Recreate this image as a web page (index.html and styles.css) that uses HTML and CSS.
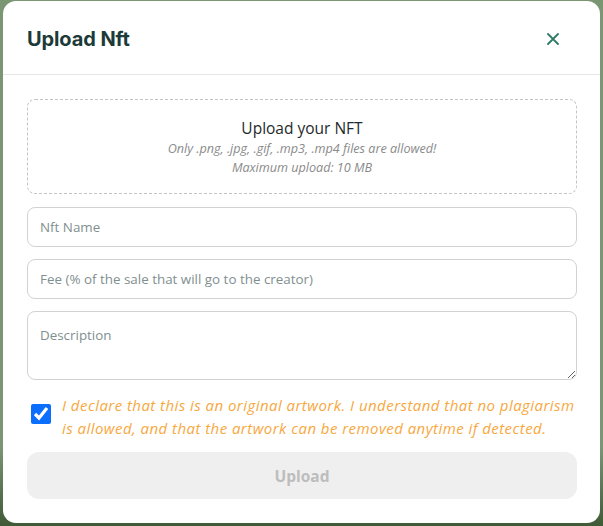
FILE: index.html
```html
<!DOCTYPE html>
<html lang="en">
<head>
<meta charset="utf-8">
<title>Upload Nft</title>
<link rel="stylesheet" href="styles.css">
</head>
<body>
<div class="modal">
  <header class="modal-header">
    <h1 class="modal-title">Upload Nft</h1>
    <button class="close-btn" aria-label="Close">
      <svg width="12" height="12" viewBox="0 0 12 12"><path d="M1 1L11 11M11 1L1 11" stroke="#2f7a66" stroke-width="1.8" stroke-linecap="round"/></svg>
    </button>
  </header>
  <div class="modal-body">
    <div class="dropzone">
      <div class="dz-title">Upload your NFT</div>
      <div class="dz-note">Only .png, .jpg, .gif, .mp3, .mp4 files are allowed!</div>
      <div class="dz-note">Maximum upload: 10 MB</div>
    </div>
    <input class="field first" type="text" placeholder="Nft Name">
    <input class="field" type="text" placeholder="Fee (% of the sale that will go to the creator)">
    <textarea class="field area" placeholder="Description"></textarea>
    <label class="declare">
      <input type="checkbox" class="check" checked>
      <span>I declare that this is an original artwork. I understand that no plagiarism is allowed, and that the artwork can be removed anytime if detected.</span>
    </label>
    <button class="upload-btn" disabled>Upload</button>
  </div>
</div>
</body>
</html>
```

FILE: styles.css
```css
html, body {
  margin: 0;
  padding: 0;
}
body {
  width: 603px;
  height: 526px;
  background: linear-gradient(180deg, #7a9673 0%, #7a9673 85%, #3f5a36 100%);
  font-family: "Open Sans", "Noto Sans", sans-serif;
  padding: 1px 3px 0 3px;
  box-sizing: border-box;
  overflow: hidden;
}
.modal {
  width: 597px;
  height: 522px;
  background: #fff;
  border-radius: 13px;
  box-sizing: border-box;
  display: flex;
  flex-direction: column;
}
.modal-header {
  height: 73px;
  border-bottom: 1px solid #e6e6e6;
  display: flex;
  align-items: center;
  justify-content: space-between;
  padding: 0 41px 0 24px;
}
.modal-title {
  margin: 0;
  font-family: "Inter", sans-serif;
  font-weight: 700;
  font-size: 20px;
  color: #1c3a37;
  letter-spacing: -0.1px;
  padding-top: 2px;
}
.close-btn {
  border: none;
  background: none;
  padding: 0;
  width: 12px;
  height: 12px;
  display: flex;
  margin-top: 2px;
}
.modal-body {
  padding: 24px 23px 0 24px;
  display: flex;
  flex-direction: column;
}
.dropzone {
  height: 95px;
  border: 1px dashed #c4c4c4;
  border-radius: 8px;
  box-sizing: border-box;
  display: flex;
  flex-direction: column;
  align-items: center;
  padding-top: 18px;
}
.dz-title {
  font-size: 15.5px;
  color: #1e2a2b;
  line-height: 21px;
  font-weight: 500;
}
.dz-note {
  font-size: 12.6px;
  font-style: italic;
  color: #8a8a8a;
  line-height: 19px;
}
.field {
  margin-top: 12px;
  height: 40px;
  border: 1px solid #d2d2d2;
  border-radius: 8px;
  box-sizing: border-box;
  padding: 0 12px;
  font-family: "Open Sans", sans-serif;
  font-size: 13.4px;
  color: #333;
  background: #fff;
  outline: none;
}
.field.first {
  margin-top: 13px;
}
.field::placeholder {
  color: #7f8f8f;
}
.area {
  height: 69px;
  padding-top: 14px;
  resize: vertical;
}
.declare {
  display: flex;
  align-items: flex-start;
  gap: 11px;
  margin-top: 14px;
  padding-left: 4px;
  font-size: 15px;
  letter-spacing: 0.45px;
  line-height: 23px;
  font-style: italic;
  color: #f7a83f;
}
.check {
  width: 20px;
  height: 20px;
  margin: 10px 0 0 0;
  flex: none;
  accent-color: #0b6efd;
}
.upload-btn {
  margin-top: 12px;
  height: 47px;
  border: none;
  border-radius: 12px;
  background: #efefef;
  color: #bdbdbd;
  font-family: "Open Sans", sans-serif;
  font-weight: 700;
  font-size: 15.5px;
}
```
